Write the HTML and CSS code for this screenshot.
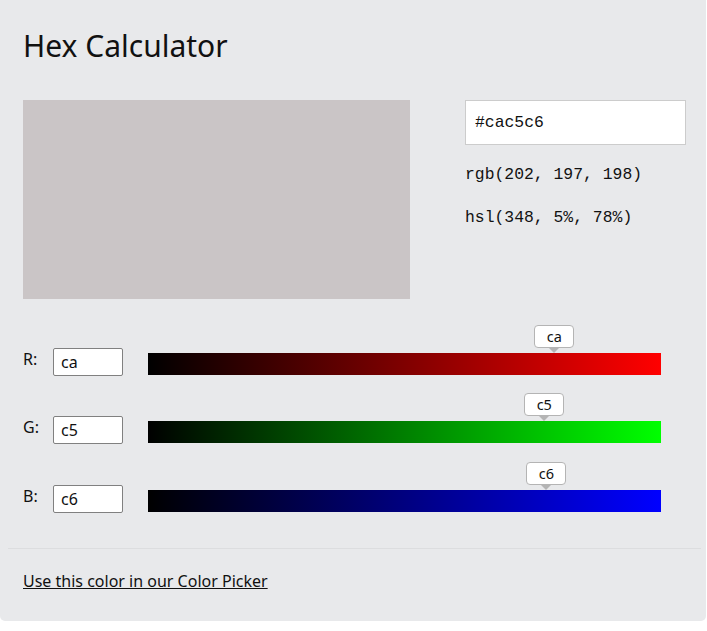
FILE: index.html
```html
<!DOCTYPE html>
<html>
<head>
<meta charset="utf-8">
<link rel="stylesheet" href="styles.css">
</head>
<body>
<div class="panel">
  <h1 class="title">Hex Calculator</h1>
  <div class="top">
    <div class="swatch"></div>
    <div class="info">
      <input class="hex" type="text" value="#cac5c6">
      <div class="code rgb">rgb(202, 197, 198)</div>
      <div class="code hsl">hsl(348, 5%, 78%)</div>
    </div>
  </div>
  <div class="rows">
    <div class="row">
      <label class="lbl">R:</label>
      <input class="chan" type="text" value="ca">
      <div class="bar bar-r">
        <div class="tip" style="left: 79.2%">ca</div>
      </div>
    </div>
    <div class="row">
      <label class="lbl">G:</label>
      <input class="chan" type="text" value="c5">
      <div class="bar bar-g">
        <div class="tip" style="left: 77.25%">c5</div>
      </div>
    </div>
    <div class="row row-last">
      <label class="lbl">B:</label>
      <input class="chan" type="text" value="c6">
      <div class="bar bar-b">
        <div class="tip" style="left: 77.65%">c6</div>
      </div>
    </div>
  </div>
  <hr class="sep">
  <a class="link" href="#">Use this color in our Color Picker</a>
</div>
</body>
</html>
```
FILE: styles.css
```css
html, body {
  margin: 0;
  padding: 0;
  background: #ffffff;
}
body {
  font-family: "Noto Sans", "Open Sans", sans-serif;
  color: #111;
}
.panel {
  box-sizing: border-box;
  width: 706px;
  height: 621px;
  background: #e8e9eb;
  border-radius: 0 0 5px 5px;
  padding: 0 20px 0 23px;
  overflow: hidden;
}
.title {
  margin: 0;
  padding-top: 26px;
  font-size: 30px;
  font-weight: 400;
  line-height: 40px;
  color: #111;
}
.top {
  display: flex;
  margin-top: 34px;
  height: 199px;
}
.swatch {
  flex-shrink: 0;
  width: 387px;
  height: 199px;
  background: #cac5c6;
}
.info {
  flex-shrink: 0;
  margin-left: 55px;
  display: flex;
  flex-direction: column;
}
.hex {
  box-sizing: border-box;
  width: 221px;
  height: 45px;
  border: 1px solid #cccccc;
  border-radius: 0;
  background: #fff;
  padding: 0 9px;
  font-family: "Liberation Mono", "DejaVu Sans Mono", monospace;
  font-size: 16.4px;
  color: #111;
  outline: none;
}
.code {
  font-family: "Liberation Mono", "DejaVu Sans Mono", monospace;
  font-size: 16.4px;
  line-height: 20px;
  color: #111;
}
.rgb {
  margin-top: 20px;
}
.hsl {
  margin-top: 23px;
}
.rows {
  margin-top: 49px;
  display: flex;
  flex-direction: column;
  gap: 40px;
}
.row {
  display: flex;
  align-items: flex-start;
  height: 28px;
}
.row-last {
  margin-top: 1px;
}
.lbl {
  width: 30px;
  font-size: 16px;
  line-height: 20px;
  margin-top: 1px;
  color: #111;
}
.chan {
  box-sizing: border-box;
  width: 70px;
  height: 28px;
  border: 1px solid #808080;
  border-radius: 2px;
  background: #fff;
  padding: 0 7px;
  font-family: "Noto Sans", "Open Sans", sans-serif;
  font-size: 16px;
  color: #111;
  outline: none;
}
.bar {
  position: relative;
  margin-left: 25px;
  margin-top: 5px;
  width: 513px;
  height: 22px;
}
.bar-r { background: linear-gradient(to right, #000000, #ff0000); }
.bar-g { background: linear-gradient(to right, #000000, #00ff00); }
.bar-b { background: linear-gradient(to right, #000000, #0000ff); }
.tip {
  position: absolute;
  bottom: 27px;
  transform: translateX(-50%);
  box-sizing: border-box;
  width: 40px;
  height: 23px;
  background: #fff;
  border: 1px solid #b4b4b4;
  border-radius: 4px;
  font-size: 14.5px;
  line-height: 21px;
  text-align: center;
  color: #111;
}
.tip::after {
  content: "";
  position: absolute;
  left: 50%;
  bottom: -6px;
  transform: translateX(-50%);
  border-left: 5px solid transparent;
  border-right: 5px solid transparent;
  border-top: 5px solid #b4b4b4;
}
.sep {
  margin: 35px -15px 0 -15px;
  border: 0;
  border-top: 1px solid #dcdddf;
  height: 0;
}
.link {
  display: inline-block;
  margin-top: 21px;
  font-size: 16px;
  line-height: 22px;
  color: #111;
  text-decoration: underline;
}
```
